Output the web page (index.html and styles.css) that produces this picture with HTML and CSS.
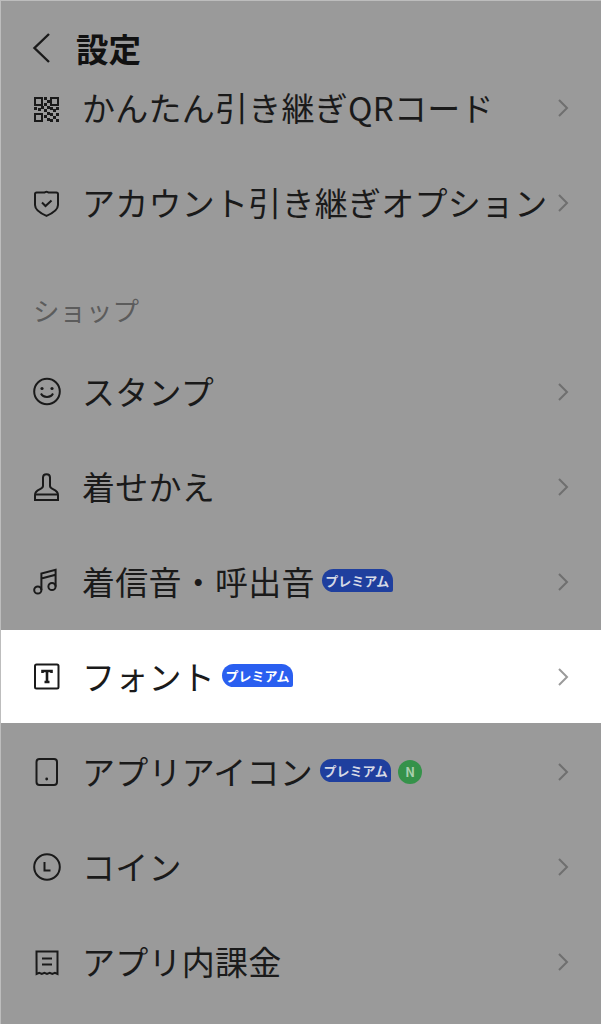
FILE: index.html
```html
<!DOCTYPE html>
<html lang="ja">
<head>
  <meta charset="UTF-8" />
  <meta name="viewport" content="width=device-width, initial-scale=1.0" />
  <title>設定</title>
  <link rel="stylesheet" href="styles.css">
</head>
<body>
  <header class="top-bar">
    <svg class="back" width="20" height="32" viewBox="0 0 20 32"><path d="M18 2 3.500 16 18 30" /></svg>
    <h1>設定</h1>
  </header>

  <ul class="menu">
    <li class="row">
      <svg class="icon" viewBox="0 0 28 28"><path d="M2 4h7v7H2zM18 4h7v7h-7zM2 20h7v7H2z" /><path class="fill" d="M11 3h3v3h-3zM14 6h3v3h-3zM11 9h3v3h-3zM14 12h3v3h-3zM11 15h3v3h-3zM8 12h3v3H8zM5 14h3v3H5zM1 13h3v3H1zM17 13h3v3h-3zM20 15h3v3h-3zM23 13h3v3h-3zM14 18h3v3h-3zM17 19h3v3h-3zM11 21h3v3h-3zM14 24h3v3h-3zM20 22h3v3h-3zM23 19h3v3h-3zM17 25h3v3h-3zM23 25h3v3h-3z" /></svg>
      <span class="label">かんたん引き継ぎQRコード</span>
      <svg class="chevron" viewBox="0 0 14 20"><path d="M3 2l8 8-8 8" /></svg>
    </li>
    <li class="row">
      <svg class="icon" viewBox="0 0 28 28"><path d="M2 5c0-1 .7-1.500 1.700-1.500h7.300c1 0 1.500-.8 2.500-.8s1.500.8 2.500.8h7.300C24.300 3.500 25 4 25 5v11c0 4.500-6 8.500-11.500 10.800C8 24.500 2 20.500 2 16z" /><path d="M9 13.500l3.500 3.500 6-5.500" /></svg>
      <span class="label">アカウント引き継ぎオプション</span>
      <svg class="chevron" viewBox="0 0 14 20"><path d="M3 2l8 8-8 8" /></svg>
    </li>

    <li class="section">ショップ</li>

    <li class="row">
      <svg class="icon" viewBox="0 0 28 28"><circle cx="14" cy="13.500" r="12.800" /><path d="M8 15.500c2 4.500 10 4.500 12 0" /><circle class="fill" cx="9" cy="10.500" r="1.600" /><circle class="fill" cx="19" cy="10.500" r="1.600" /></svg>
      <span class="label">スタンプ</span>
      <svg class="chevron" viewBox="0 0 14 20"><path d="M3 2l8 8-8 8" /></svg>
    </li>
    <li class="row">
      <svg class="icon" viewBox="0 0 28 28"><path d="M10 13V4.500c0-4.500 7-4.500 7 0V13c0 4 8 3 8 9v5H2v-5c0-6 8-5 8-9z" /><path d="M2 21.500h23" /></svg>
      <span class="label">着せかえ</span>
      <svg class="chevron" viewBox="0 0 14 20"><path d="M3 2l8 8-8 8" /></svg>
    </li>
    <li class="row">
      <svg class="icon" viewBox="0 0 28 28"><circle cx="4.800" cy="22" r="3.600" /><circle cx="19" cy="18.500" r="3.600" /><path d="M8.400 22V5.500L22.600 1.800v16.700M8.400 10.500l14.200-3.700" /></svg>
      <span class="label">着信音・呼出音</span>
      <span class="badge">プレミアム</span>
      <svg class="chevron" viewBox="0 0 14 20"><path d="M3 2l8 8-8 8" /></svg>
    </li>
    <li class="row active">
      <svg class="icon" viewBox="0 0 28 28"><rect x="2" y="1.500" width="23.500" height="24" rx="1.500" /><path class="thick" d="M9.500 10V8h9v2M14 8v11M11.500 19h5" /></svg>
      <span class="label">フォント</span>
      <span class="badge">プレミアム</span>
      <svg class="chevron" viewBox="0 0 14 20"><path d="M3 2l8 8-8 8" /></svg>
    </li>
    <li class="row">
      <svg class="icon" viewBox="0 0 28 28"><rect x="3.500" y="1" width="20.500" height="26" rx="3" /><circle class="fill" cx="13.700" cy="21" r="1.400" /></svg>
      <span class="label">アプリアイコン</span>
      <span class="badge">プレミアム</span>
      <span class="new-dot">N</span>
      <svg class="chevron" viewBox="0 0 14 20"><path d="M3 2l8 8-8 8" /></svg>
    </li>
    <li class="row">
      <svg class="icon" viewBox="0 0 28 28"><circle cx="14" cy="14" r="12.800" /><path d="M11.500 9v8.500h6" /></svg>
      <span class="label">コイン</span>
      <svg class="chevron" viewBox="0 0 14 20"><path d="M3 2l8 8-8 8" /></svg>
    </li>
    <li class="row">
      <svg class="icon" viewBox="0 0 28 28"><path d="M3.500 3.500h21v22.500l-2.600-1.200-2.600 1.200-2.600-1.200-2.700 1.200-2.600-1.200-2.600 1.200-2.600-1.200-2.600 1.200z" /><path d="M9 10.500h10M9 16.500h10" /></svg>
      <span class="label">アプリ内課金</span>
      <svg class="chevron" viewBox="0 0 14 20"><path d="M3 2l8 8-8 8" /></svg>
    </li>
  </ul>
</body>
</html>
```

FILE: styles.css
```css
body {
  margin: 0;
  height: 1024px;
  overflow: hidden;
  background-color: #9a9a9a;
  border-top: 1px solid #bdbdbd;
  border-left: 1px solid #bdbdbd;
  box-sizing: border-box;
  font-family: "Noto Sans CJK JP", "Noto Sans", sans-serif;
  color: #1a1a1a;
}
.top-bar {
  display: flex;
  align-items: center;
  height: 63px;
  padding: 31px 0 0 30px;
  box-sizing: border-box;
}
.top-bar h1 {
  margin: 0 0 0 25px;
  font-size: 32.500px;
  line-height: 32px;
  font-weight: 700;
  color: #111;
}
.back {
  fill: none;
  stroke: #1a1a1a;
  stroke-width: 2.4;
}
.menu {
  list-style: none;
  margin: -4px 0 0;
  padding: 0;
}
.row {
  display: flex;
  align-items: center;
  height: 95px;
  padding: 0 31px 0 32px;
}
.row.active {
  height: 93px;
  margin: 1px 0 1px -1px;
  padding-left: 33px;
  background-color: #fff;
}
.section {
  display: flex;
  align-items: center;
  height: 94px;
  padding: 25px 0 0 32px;
  box-sizing: border-box;
  font-size: 26.500px;
  color: #5c5c5c;
}
.icon {
  flex: none;
  width: 28px;
  height: 28px;
  margin-right: 21px;
  overflow: visible;
  fill: none;
  stroke: #1a1a1a;
  stroke-width: 2;
}
.icon .fill {
  stroke: none;
  fill: #1a1a1a;
}
.icon .thick {
  stroke-width: 2.600;
}
.label {
  padding-bottom: 1px;
  font-size: 33px;
  letter-spacing: 0.25px;
  line-height: 48px;
  white-space: nowrap;
}
.badge {
  margin: 0 0 2px 7px;
  width: 71px;
  height: 23px;
  border-radius: 12px 12px 2px 12px;
  background-color: #1f3f9e;
  color: #d5d9e6;
  font-size: 13px;
  font-weight: 700;
  line-height: 23px;
  text-align: center;
  white-space: nowrap;
}
.active .badge {
  background-color: #2a5ff0;
  color: #fff;
}
.new-dot {
  margin-left: 7px;
  width: 24px;
  height: 24px;
  border-radius: 50%;
  background-color: #35924a;
  color: #a9cfae;
  font-size: 13px;
  font-weight: 700;
  line-height: 24px;
  text-align: center;
}
.chevron {
  flex: none;
  width: 14px;
  height: 20px;
  margin-left: auto;
  fill: none;
  stroke: #6f6f6f;
  stroke-width: 2;
}
.active .chevron {
  stroke: #9a9a9a;
}
```
